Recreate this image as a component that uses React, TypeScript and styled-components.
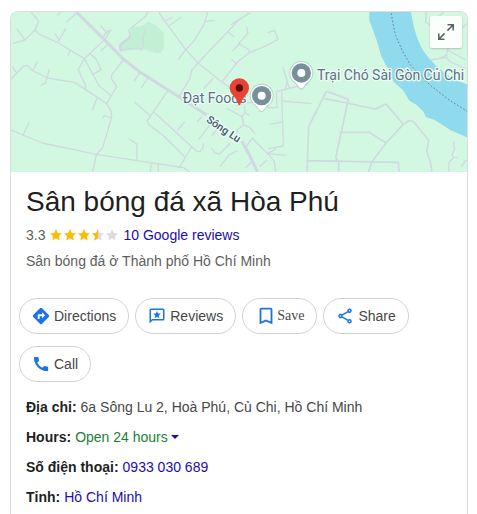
import React from "react";
import styled, { createGlobalStyle } from "styled-components";

const GlobalStyle = createGlobalStyle`
  *, *::before, *::after { box-sizing: border-box; }
  body {
    margin: 0;
    background: #fff;
    color: #474747;
    font-family: "Liberation Sans", Arial, sans-serif;
    font-size: 14px;
    line-height: 22px;
  }
`;

const Page = styled.main`
  padding: 11px 9px 0 10px;
`;

const Card = styled.article`
  min-height: calc(100vh - 11px);
  border: 1px solid #dadce0;
  border-bottom: 0;
  border-radius: 8px 8px 0 0;
  overflow: hidden;
`;

const MapArea = styled.div`
  position: relative;
  height: 160px;
  background: #d3f8e2;
`;

const MapDrawing = styled.svg`
  display: block;
  width: 100%;
  height: 100%;
`;

const ExpandButton = styled.button`
  position: absolute;
  top: 4px;
  right: 5px;
  display: grid;
  place-items: center;
  width: 32px;
  height: 32px;
  padding: 0;
  border: 0;
  border-radius: 2px;
  background: rgba(255, 255, 255, 0.9);
  box-shadow: 0 1px 2px rgba(0, 0, 0, 0.2);
  cursor: pointer;
`;

const Header = styled.header`
  padding: 12px 15px 0;
`;

const Title = styled.h1`
  margin: 0;
  color: #1f1f1f;
  font-size: 28px;
  font-weight: 400;
  line-height: 36px;
`;

const RatingRow = styled.div`
  display: flex;
  align-items: center;
  margin-top: 4px;
  color: #5e5e5e;
`;

const Stars = styled.svg`
  margin: 0 4px;
`;

const Category = styled.p`
  margin: 4px 0 0;
  color: #5e5e5e;
`;

const Link = styled.a`
  color: #1a0dab;
  text-decoration: none;
  &:hover { text-decoration: underline; }
`;

const Actions = styled.div`
  display: flex;
  flex-wrap: wrap;
  gap: 12px 6px;
  padding: 26px 8px 0;
`;

const ActionButton = styled.button<{ $serif?: boolean }>`
  display: flex;
  align-items: center;
  gap: ${(p) => (p.$serif ? 0 : 4)}px;
  height: 36px;
  padding: 0 12px;
  border: 1px solid #d2d2d2;
  border-radius: 18px;
  background: #fff;
  color: #474747;
  font-family: ${(p) => (p.$serif ? '"Liberation Serif", "Times New Roman", serif' : "inherit")};
  font-size: 14px;
  line-height: 20px;
  cursor: pointer;
`;

const Icon = styled.svg`
  flex: none;
  fill: #1a73e8;
`;

const Facts = styled.dl`
  display: grid;
  gap: 8px;
  margin: 0;
  padding: 14px 15px 0;
`;

const Fact = styled.div`
  display: flex;
  gap: 4px;
`;

const Label = styled.dt`
  color: #1f1f1f;
  font-weight: 700;
`;

const Value = styled.dd`
  margin: 0;
`;

const HoursButton = styled.button`
  display: flex;
  align-items: center;
  gap: 3px;
  padding: 0;
  border: 0;
  background: none;
  color: #188038;
  font: inherit;
  cursor: pointer;
`;

const Caret = styled.span`
  border: 4px solid transparent;
  border-top-color: #1a0dab;
  border-bottom: 0;
`;

// Map geometry uses three units for every screen pixel.
const westRoads = [
  "M93 36L116 63L105 90L75 120L38 131M75 120L50 86M105 90L115 101L173 128L253 176L315 118L332 90M173 128L197 86M176 119L165 100M204 168L210 151M200 66L229 40M172 46L183 37",
  "M30 240L71 198L82 196L98 212L143 234L223 247L256 268L320 311L334 335L335 352L308 443L289 463L278 516M49 218L37 200M98 212L113 184M122 257L137 248L148 208M276 332L291 295M308 355L313 347L334 353",
  "M253 176L235 209L256 255V268M253 176L297 257L332 286M271 162L288 176L303 209L278 224M370 180L334 226L335 237L350 260L320 311M302 153L322 134M302 76L322 101",
  "M30 389L127 429L289 463L411 482L539 501L552 503L571 518M69 405L88 366M386 416L411 432V482M453 490L451 518M475 493V518",
  "M479 36V42L557 149L594 189L665 246L700 270M498 62L518 51M508 77L544 51M623 36L612 73L581 124L557 149L535 179M612 65L644 61",
  "M720 56L594 189L575 211L570 235L537 290M684 96L704 112M697 154L720 130M694 178L709 191M720 178L665 246M641 234L610 267",
  "M404 307L449 346M502 274L461 335L441 363L447 374L487 404L554 470M461 335L575 440L539 501M532 391L554 366M575 440L590 454L600 455L610 442V430M591 366L606 350M596 418L629 376M635 407L650 390M635 445L644 458L659 462L690 430M660 500L686 466L711 452",
  "M402 244L420 217M424 264L442 236",
];

const eastRoads = [
  "M-18 74L41 37M-6 193L39 157L32 147L5 130L33 100L29 80M39 157L82 140L123 118L112 91L92 98",
  "M138 202L158 268M151 240L145 272M119 274L213 252M93 324L120 322L118 276M93 324L88 308M134 273L139 438L94 446M139 303L224 311M98 373L136 366M134 350H138",
  "M-31 325L15 350L20 374L40 384L53 400M22 318L24 338L37 346M15 350L22 340M20 374L0 391V410M0 316L60 303",
  "M24 444L46 415L92 461L148 466M92 461L118 446M92 461L112 484L116 518M26 503L46 484M68 500L90 480",
  "M568 36L566 65L582 78M620 36L605 50L590 66M690 70L650 110L631 150L628 172L579 180M628 172L640 186L687 206M631 150L687 180M605 177L628 165",
  "M650 424V438L653 447L645 465L650 473L636 487V518M650 473L662 472M672 500L688 480",
];

const eastMainRoads = [
  "M268 274L215 380L210 518M268 274L334 298L296 474L305 485V518M262 296L330 309M330 309L415 327L447 312L499 373L447 429L404 487L394 518M307 397H397L447 429M211 482L484 487L486 518M499 373L515 363H528L575 421L569 456L580 484L585 518",
];

function GreyPin({ x, y }: { x: number; y: number }) {
  return (
    <g transform={`translate(${x} ${y})`}>
      <path d="M0 50C-8 50-10 38-21 29A36 36 0 1 1 21 29C10 38 8 50 0 50Z" fill="#8aa4a5" opacity=".4" />
      <path d="M0 46C-6 46-9 35-19 27A33 33 0 1 1 19 27C9 35 6 46 0 46Z" fill="#fff" />
      <circle r="29" fill="#78909c" />
      <circle r="12" fill="#fff" />
    </g>
  );
}

function PlaceMap() {
  return (
    <MapDrawing viewBox="33 36 1368 480" preserveAspectRatio="xMidYMid slice" role="img" aria-label="Map">
      <rect x="-600" y="36" width="2600" height="480" fill="#d3f8e2" />
      <path d="M397 81L425 79L445 65L466 75L491 98L493 145L482 158L467 159L431 148L362 153L358 132L384 112Z" fill="#c3f0d5" />
      <path d="M1108 36H1233C1240 84 1254 127 1270 152C1291 181 1325 218 1365 239L1401 253V412L1352 391L1303 359L1277 351L1271 336L1249 314L1228 302L1209 271L1181 245L1163 204L1143 168Q1132 119 1108 62Z" fill="#90daee" />
      <g fill="none" stroke="#cfd9e0" strokeLinejoin="round">
        <g strokeWidth="4">{westRoads.map((d) => <path key={d} d={d} />)}</g>
        <path d="M391 109L386 91L407 73L438 48L443 36M360 153L374 148L412 144L425 150L431 137L429 116L435 88" strokeWidth="4" />
        <path d="M361 152V134L391 110" strokeWidth="8" />
        <path d="M229 36L310 116L370 177L420 216L537 291L620 345" strokeWidth="9" />
        <path d="M310 110L319 96L334 90" strokeWidth="5" />
        <g transform="translate(711 0)">
          <g strokeWidth="4">{eastRoads.map((d) => <path key={d} d={d} />)}</g>
          <g strokeWidth="5">{eastMainRoads.map((d) => <path key={d} d={d} />)}</g>
          <path d="M14 424L38 466L62 518" strokeWidth="9" />
        </g>
      </g>
      <path d="M1174 40L1179 72L1187 107L1206 150L1230 193L1292 257L1348 300L1401 334" fill="none" stroke="#65818b" strokeWidth="3" strokeDasharray="5 6" />
      <g
        fontFamily="Roboto, sans-serif"
        fontSize="42"
        fill="#5b7285"
        stroke="#edfcf4"
        strokeWidth="8"
        strokeLinejoin="round"
        paintOrder="stroke"
      >
        <text x="548" y="308">Đạt Foods</text>
        <text x="951" y="240">Trại Chó Sài Gòn Củ Chi</text>
        <text transform="translate(617 364) rotate(34)" fontSize="32" fontWeight="500" fill="#42566b">Sông Lu</text>
      </g>
      <GreyPin x={785} y={287} />
      <GreyPin x={904} y={219} />
      <path d="M718 316C714 316 715 304 699 286A29 29 0 1 1 737 286C721 304 722 316 718 316Z" fill="#ea4335" />
      <circle cx="718" cy="264" r="11" fill="#5b0d0a" />
    </MapDrawing>
  );
}

const starPath = "M6 0L7.8 3.9L12 4.4L8.9 7.2L9.7 11.4L6 9.3L2.3 11.4L3.1 7.2L0 4.4L4.2 3.9Z";

function StarRating() {
  return (
    <Stars width="70" height="12" viewBox="0 0 70 12" role="img" aria-label="Rated 3.3 out of 5">
      <clipPath id="half"><rect width="6" height="12" /></clipPath>
      {[0, 1, 2, 3, 4].map((i) => (
        <g key={i} transform={`translate(${1 + i * 14} 0)`}>
          <path d={starPath} fill={i < 3 ? "#fbbc04" : "#dadce0"} />
          {i === 3 && <path d={starPath} fill="#fbbc04" clipPath="url(#half)" />}
        </g>
      ))}
    </Stars>
  );
}

const actions = [
  { label: "Directions", size: 18, d: "M22.4 10.6l-9-9a2 2 0 0 0-2.8 0l-9 9a2 2 0 0 0 0 2.8l9 9a2 2 0 0 0 2.8 0l9-9a2 2 0 0 0 0-2.8zM13.5 15v-2.7h-3.3V16H7.6v-5a1.3 1.3 0 0 1 1.3-1.3h4.6V7l4 4-4 4z" },
  { label: "Reviews", size: 18, d: "M20 2H4a2 2 0 0 0-2 2v18l4-4h14a2 2 0 0 0 2-2V4a2 2 0 0 0-2-2zm0 14H5.2L4 17.2V4h16v12zM12 5l1.4 3.5 3.8.3-2.9 2.4.9 3.7-3.2-2-3.2 2 .9-3.7-2.9-2.4 3.8-.3z" },
  { label: "Save", size: 22, serif: true, d: "M17 3H7a2 2 0 0 0-2 2v16l7-3 7 3V5a2 2 0 0 0-2-2zm0 15l-5-2.2L7 18V5h10v13z" },
  { label: "Share", size: 18, d: "M18 16c-.8 0-1.5.3-2 .8l-7.1-4.1a3 3 0 0 0 0-1.4L16 7.2A3 3 0 1 0 15 5c0 .2 0 .5.1.7L8 9.8a3 3 0 1 0 0 4.4l7.1 4.2-.1.6a3 3 0 1 0 3-3zm0-12a1 1 0 1 1 0 2 1 1 0 0 1 0-2zM6 13a1 1 0 1 1 0-2 1 1 0 0 1 0 2zm12 7a1 1 0 1 1 0-2 1 1 0 0 1 0 2z" },
  { label: "Call", size: 18, d: "M16.3 14.6l-2.6 2.5a15 15 0 0 1-6.7-6.7l2.5-2.6L8.5 2.5H2.6C2 13 11 22 21.5 21.4v-5.8z" },
];

export default function App() {
  return (
    <>
      <GlobalStyle />
      <Page>
        <Card>
          <MapArea>
            <PlaceMap />
            <ExpandButton aria-label="Expand map">
              <svg width="18" height="18" viewBox="0 0 18 18" fill="none" stroke="#5f6368" strokeWidth="1.6">
                <path d="M10.5 1.8h5.7v5.7M16.2 1.8L10.4 7.6M7.5 16.2H1.8v-5.7M1.8 16.2l5.8-5.8" />
              </svg>
            </ExpandButton>
          </MapArea>
          <Header>
            <Title>Sân bóng đá xã Hòa Phú</Title>
            <RatingRow>
              <span>3.3</span>
              <StarRating />
              <Link href="#reviews">10 Google reviews</Link>
            </RatingRow>
            <Category>Sân bóng đá ở Thành phố Hồ Chí Minh</Category>
          </Header>
          <Actions>
            {actions.map(({ label, size, serif, d }) => (
              <ActionButton key={label} $serif={serif}>
                <Icon width={size} height={size} viewBox="0 0 24 24" aria-hidden="true">
                  <path d={d} />
                </Icon>
                {label}
              </ActionButton>
            ))}
          </Actions>
          <Facts>
            <Fact>
              <Label>Địa chỉ:</Label>
              <Value>6a Sông Lu 2, Hoà Phú, Củ Chi, Hồ Chí Minh</Value>
            </Fact>
            <Fact>
              <Label>Hours:</Label>
              <Value>
                <HoursButton aria-expanded="false">Open 24 hours<Caret /></HoursButton>
              </Value>
            </Fact>
            <Fact>
              <Label>Số điện thoại:</Label>
              <Value><Link href="tel:0933030689">0933 030 689</Link></Value>
            </Fact>
            <Fact>
              <Label>Tỉnh:</Label>
              <Value><Link href="#province">Hồ Chí Minh</Link></Value>
            </Fact>
          </Facts>
        </Card>
      </Page>
    </>
  );
}
